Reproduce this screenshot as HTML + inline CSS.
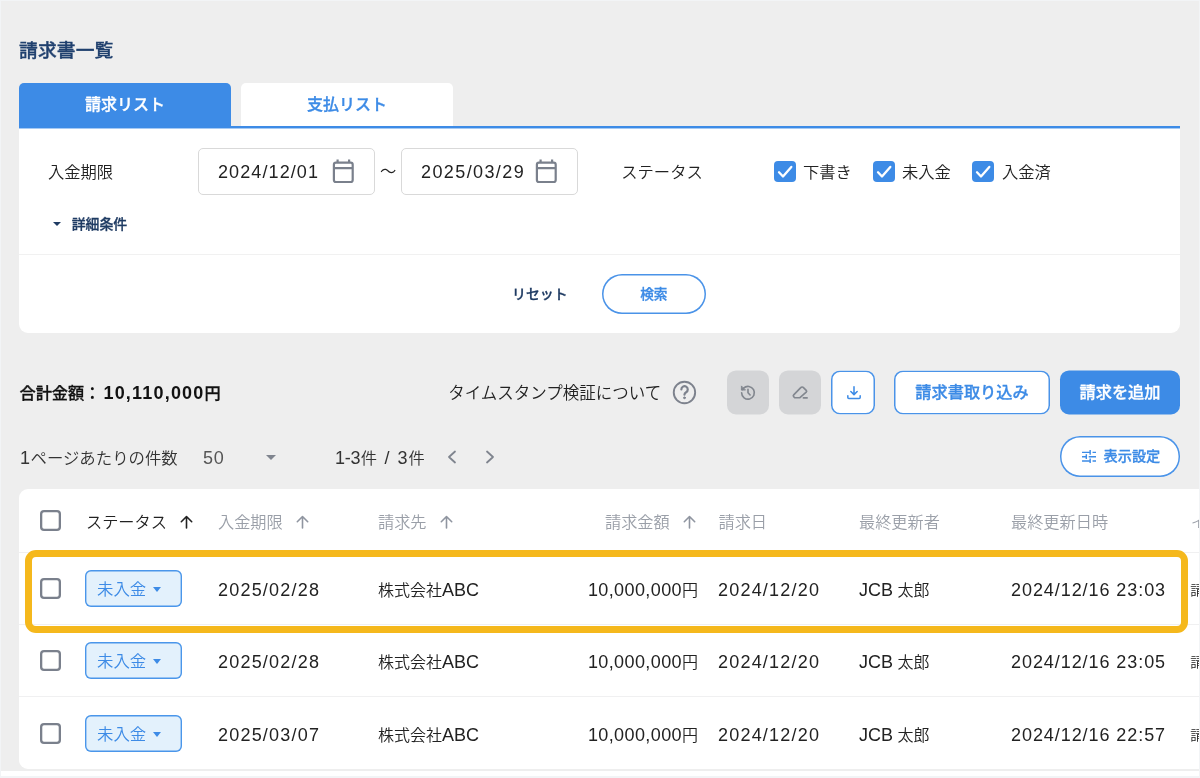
<!DOCTYPE html>
<html lang="ja">
<head>
<meta charset="utf-8">
<title>請求書一覧</title>
<style>
*{box-sizing:border-box;margin:0;padding:0}
html,body{width:1200px;height:778px;overflow:hidden}
body{background:#eeeeee;font-family:"Liberation Sans","Noto Sans CJK JP",sans-serif;font-size:16.3px;font-weight:350;color:#222;position:relative;-webkit-font-smoothing:antialiased}
.abs{position:absolute}
.l{font-size:18px}
.edge-l{left:0;top:0;width:1.200px;height:778px;background:#f2f4f6;z-index:5}
.edge-r{left:1198.900px;top:0;width:1.100px;height:778px;background:#f2f4f6;z-index:5}
.edge-t{left:0;top:0;width:1200px;height:1.200px;background:#f2f4f6;z-index:5}
.edge-b1{left:1px;top:771px;width:1199px;height:5px;background:#fff}
.edge-b2{left:0;top:776px;width:1200px;height:2px;background:#f2f4f6;z-index:5}
h1{position:absolute;left:19px;top:37.600px;font-size:18.800px;line-height:26px;font-weight:500;-webkit-text-stroke:.350px #20406e;color:#20406e;letter-spacing:.100px;transform:scaleY(.960)}
.tab{position:absolute;top:82.500px;height:44.500px;width:212px;border-radius:5px 5px 0 0;font-weight:500;-webkit-text-stroke:.300px currentColor;font-size:16px;line-height:44.500px;text-align:center}
.tab.on{left:19px;background:#3d8be6;color:#fff}
.tab.off{left:241px;background:#fff;color:#3d8be6}
.tabline{z-index:1;left:19px;top:126px;width:1161px;height:3px;background:linear-gradient(to bottom,#3d8be6 0,#3d8be6 2px,#a6caf4 2px,#a6caf4 3px)}
.card{left:19px;top:128px;width:1161px;height:205px;background:#fff;border-radius:0 0 9px 9px}
.lbl{position:absolute;line-height:24px;font-size:16.3px;color:#222;white-space:nowrap}
.date{position:absolute;top:147.5px;width:177px;height:47px;border:1px solid #d9d9d9;border-radius:5px;background:#fff}
.date span{position:absolute;left:19px;top:10.5px;line-height:26px;font-size:18px;letter-spacing:1.1px;color:#222;white-space:nowrap}
.date svg{position:absolute;left:132px;top:10px;overflow:visible}
.cb{position:absolute;top:160.5px;width:21.5px;height:21.5px;border-radius:4px;background:#3d8be6}
.cb svg{position:absolute;left:0;top:0}
.more{position:absolute;left:71.700px;top:214.300px;font-size:13.9px;line-height:20px;font-weight:500;-webkit-text-stroke:.300px currentColor;color:#1f3b63;white-space:nowrap}
.caret{position:absolute;width:0;height:0;border-left:4px solid transparent;border-right:4px solid transparent;border-top:4.5px solid #1f3b63}
.hr{left:19px;top:254px;width:1161px;height:1px;background:#f1f1f1}
.reset{position:absolute;left:512px;top:284px;font-size:13.9px;line-height:20px;font-weight:500;-webkit-text-stroke:.300px currentColor;color:#1f3b63;white-space:nowrap}
.pill{position:absolute;height:40px;border:0;box-shadow:inset 0 0 0 1.500px #4a93e8;border-radius:20px;background:#fff;color:#3d8be6;font-weight:500;-webkit-text-stroke:.300px currentColor;font-size:13.7px;line-height:41.500px;text-align:center;white-space:nowrap}
.total{position:absolute;left:19.500px;top:381px;line-height:24px;font-size:16.2px;font-weight:500;-webkit-text-stroke:.300px currentColor;color:#111;white-space:nowrap}
.total .l{font-size:18px;letter-spacing:1.200px;margin-left:3px;font-weight:700;-webkit-text-stroke:0}
.ibtn{position:absolute;top:370px;height:43.500px;border-radius:9px;transform:translateY(.450px)}
.ibtn.g{width:42px;background:#d4d5d7}
.ibtn.o{width:44.300px;background:#fff;box-shadow:inset 0 0 0 1.500px #4a93e8}
.ibtn svg{position:absolute;left:50%;top:50%;transform:translate(-50%,-50%)}
.btn{position:absolute;top:370px;transform:translateY(.450px);height:43.500px;border-radius:9px;font-weight:500;-webkit-text-stroke:.300px currentColor;font-size:16.2px;line-height:44px;text-align:center;white-space:nowrap}
.btn.o{background:#fff;box-shadow:inset 0 0 0 1.500px #4a93e8;color:#3d8be6}
.btn.f{background:#3d8be6;color:#fff}
.pg{position:absolute;top:445.700px;line-height:24px;font-size:16.3px;color:#333;white-space:nowrap}
.tbl{left:19px;top:489.400px;width:1190px;height:279.600px;background:#fff;border-radius:9px 0 0 9px;overflow:hidden}
.rowline{position:absolute;left:0;width:1190px;height:1px;background:#f0f0f1}
.th{position:absolute;top:510.300px;line-height:24px;font-size:16.2px;color:#9a9fa8;white-space:nowrap}
.th.k{color:#222}
.td{position:absolute;line-height:24px;font-size:16px;color:#222;white-space:nowrap}
.td .l{letter-spacing:1.200px}
.ck{position:absolute;left:40px;width:21px;height:21px;border:0;box-shadow:inset 0 0 0 2.300px #7a808c;border-radius:4px;background:#fff}
.badge{position:absolute;left:85px;width:97px;height:37px;border:0;box-shadow:inset 0 0 0 1.400px #4a96ea;border-radius:6px;background:#e3f1fc;color:#3d8be6;font-size:16.400px;line-height:39.500px;padding-left:12px;white-space:nowrap}
.badge i{position:absolute;left:68.400px;top:16.700px;width:0;height:0;border-left:4.900px solid transparent;border-right:4.900px solid transparent;border-top:5.200px solid #3d8be6}
.hl{left:25px;top:550px;width:1163px;height:83px;border:7px solid #f5b81c;border-radius:11px}
</style>
</head>
<body>
<div id="root" style="position:absolute;left:0;top:0;width:1200px;height:778px;will-change:transform">
<div class="abs edge-l"></div>
<div class="abs edge-r"></div>
<div class="abs edge-t"></div>
<div class="abs edge-b1"></div>
<div class="abs edge-b2"></div>

<h1>請求書一覧</h1>
<div class="tab on">請求リスト</div>
<div class="tab off">支払リスト</div>
<div class="abs tabline"></div>

<div class="abs card"></div>
<div class="lbl" style="left:48px;top:159.500px">入金期限</div>
<div class="date" style="left:198px"><span>2024/12/01</span>
<svg width="24" height="26" viewBox="0 0 24 26" fill="none" stroke="#7a808c" stroke-width="2.200"><rect x="2.900" y="3.700" width="18.800" height="19.300" rx="2"/><path d="M2.900 9.200h18.800M6.600 .500v3.500M18.100 .500v3.500"/></svg></div>
<div class="lbl" style="left:380px;top:159.300px">～</div>
<div class="date" style="left:401px"><span style="letter-spacing:1.400px">2025/03/29</span>
<svg width="24" height="26" viewBox="0 0 24 26" fill="none" stroke="#7a808c" stroke-width="2.200"><rect x="2.900" y="3.700" width="18.800" height="19.300" rx="2"/><path d="M2.900 9.200h18.800M6.600 .500v3.500M18.100 .500v3.500"/></svg></div>
<div class="lbl" style="left:621.300px;top:159.500px">ステータス</div>

<div class="cb" style="left:774px"><svg width="21" height="21" viewBox="0 0 21 21" fill="none" stroke="#fff" stroke-width="2.3" stroke-linecap="round" stroke-linejoin="round"><path d="M5 11.300l4 4.200 8.300-9.600"/></svg></div>
<div class="lbl" style="left:803px;top:159.500px">下書き</div>
<div class="cb" style="left:873px"><svg width="21" height="21" viewBox="0 0 21 21" fill="none" stroke="#fff" stroke-width="2.3" stroke-linecap="round" stroke-linejoin="round"><path d="M5 11.300l4 4.200 8.300-9.600"/></svg></div>
<div class="lbl" style="left:902px;top:159.500px">未入金</div>
<div class="cb" style="left:972px"><svg width="21" height="21" viewBox="0 0 21 21" fill="none" stroke="#fff" stroke-width="2.3" stroke-linecap="round" stroke-linejoin="round"><path d="M5 11.300l4 4.200 8.300-9.600"/></svg></div>
<div class="lbl" style="left:1002px;top:159.500px">入金済</div>

<div class="caret" style="left:53px;top:222px"></div>
<div class="more">詳細条件</div>
<div class="abs hr"></div>
<div class="reset">リセット</div>
<div class="pill" style="left:601.700px;top:273.700px;width:104.300px;height:40.300px">検索</div>

<div class="total">合計金額：<span class="l">10,110,000</span>円</div>
<div class="lbl" style="left:448.200px;top:381px;font-size:16.500px">タイムスタンプ検証について</div>
<svg class="abs" style="left:672px;top:380px;overflow:visible" width="24" height="24" viewBox="0 0 24 24" fill="none" stroke="#7d828d" stroke-width="1.900" stroke-linecap="round"><g transform="translate(.450 .500)"><circle cx="12" cy="12" r="10.700"/><path d="M8.900 8.900a3.200 3.200 0 1 1 4.800 2.800c-1 .600-1.700 1.300-1.700 2.500" stroke-width="2.200"/><circle cx="12" cy="17.300" r=".900" fill="#7d828d" stroke-width="1"/></g></svg>

<div class="ibtn g" style="left:727px"><svg width="18" height="18" viewBox="0 0 24 24" fill="none" stroke="#82878f" stroke-width="2.2" stroke-linecap="round" stroke-linejoin="round"><path d="M3.500 12.400a8.500 8.500 0 1 0 2.600-6.100L4.200 8.200"/><path d="M3.200 3.800v5h5z" fill="#82878f" stroke-width="1.200"/><path d="M12 7.800v4.600l2.800 3"/></svg></div>
<div class="ibtn g" style="left:779px"><svg width="20" height="18" viewBox="0 0 26 24" fill="none" stroke="#82878f" stroke-width="2.2" stroke-linecap="round" stroke-linejoin="round"><path d="M14 5.600L4.600 15.200a1.800 1.800 0 0 0 0 2.500l1.300 1.300h7L21.300 11.700a1.800 1.800 0 0 0 0-2.500l-3.700-3.700a2.500 2.500 0 0 0-3.600.100z"/><path d="M17.500 19.300h5"/></svg></div>
<div class="ibtn o" style="left:831px"><svg style="margin-left:.400px" width="17" height="16" viewBox="0 0 25.500 24" fill="none" stroke="#3d8be6" stroke-width="2.300" stroke-linecap="round" stroke-linejoin="round"><path d="M12.750 3.500v11.500M8 10.500l4.750 4.750 4.750-4.750M3.500 17v2.500a1.500 1.500 0 0 0 1.500 1.500h15.500a1.500 1.500 0 0 0 1.500-1.500V17"/></svg></div>
<div class="btn o" style="left:894px;width:156px">請求書取り込み</div>
<div class="btn f" style="left:1060px;width:120px">請求を追加</div>

<div class="pg" style="left:20px;font-size:16.400px"><span class="l" style="letter-spacing:.500px">1</span>ページあたりの件数</div>
<div class="pg" style="left:203px;color:#555"><span class="l" style="letter-spacing:.8px">50</span></div>
<div class="caret" style="left:266px;top:455px;border-left-width:5px;border-right-width:5px;border-top:5.5px solid #7f848e"></div>
<div class="pg" style="left:335px"><span class="l" style="letter-spacing:-.300px">1-3</span><span style="margin-left:.500px">件</span><span class="l" style="margin:0 8px 0 7.500px">/</span><span class="l">3</span><span style="margin-left:1px">件</span></div>
<svg class="abs" style="left:446px;top:449px" width="12" height="16" viewBox="0 0 12 16" fill="none" stroke="#7f848e" stroke-width="1.8" stroke-linecap="round" stroke-linejoin="round"><path d="M9 2.500L3 8l6 5.500"/></svg>
<svg class="abs" style="left:484px;top:449px" width="12" height="16" viewBox="0 0 12 16" fill="none" stroke="#7f848e" stroke-width="1.8" stroke-linecap="round" stroke-linejoin="round"><path d="M3 2.500L9 8l-6 5.500"/></svg>
<div class="pill" style="left:1059.700px;top:436.400px;width:120.300px;height:40.500px;font-size:14.200px;padding-left:24.200px;line-height:41.300px">表示設定</div>
<svg class="abs" style="left:1081.900px;top:450px" width="14.400" height="13.400" viewBox="0 0 15 14" fill="none" stroke="#3d8be6" stroke-width="1.5"><path d="M0 2.500h8M11 2.500h4M0 7h4M7 7h8M0 11.500h8M11 11.500h4M8.500 0v5M4.500 4.500v5M8.500 9v5"/></svg>

<div class="abs tbl">
<div class="rowline" style="top:62.600px"></div>
<div class="rowline" style="top:134.600px"></div>
<div class="rowline" style="top:206.900px"></div>
</div>
<div class="ck" style="top:510px"></div>
<div class="th k" style="left:86px">ステータス</div><svg class="abs" style="left:180px;top:514.500px" width="13" height="14" viewBox="0 0 13 14" fill="none" stroke="#222" stroke-width="1.600" stroke-linecap="round" stroke-linejoin="round"><path d="M6.500 13V1.500M1.300 6.700l5.200-5.200 5.200 5.200"/></svg>
<div class="th" style="left:218px">入金期限</div><svg class="abs" style="left:296px;top:514.500px" width="13" height="14" viewBox="0 0 13 14" fill="none" stroke="#8f95a0" stroke-width="1.600" stroke-linecap="round" stroke-linejoin="round"><path d="M6.500 13V1.500M1.300 6.700l5.200-5.200 5.200 5.200"/></svg>
<div class="th" style="left:378px">請求先</div><svg class="abs" style="left:440px;top:514.500px" width="13" height="14" viewBox="0 0 13 14" fill="none" stroke="#8f95a0" stroke-width="1.600" stroke-linecap="round" stroke-linejoin="round"><path d="M6.500 13V1.500M1.300 6.700l5.200-5.200 5.200 5.200"/></svg>
<div class="th" style="left:605px">請求金額</div><svg class="abs" style="left:682.5px;top:514.500px" width="13" height="14" viewBox="0 0 13 14" fill="none" stroke="#8f95a0" stroke-width="1.600" stroke-linecap="round" stroke-linejoin="round"><path d="M6.500 13V1.500M1.300 6.700l5.200-5.200 5.200 5.200"/></svg>
<div class="th" style="left:718.500px">請求日</div>
<div class="th" style="left:859px">最終更新者</div>
<div class="th" style="left:1011px">最終更新日時</div>
<div class="th" style="left:1191px;font-size:14px">インボイス</div>

<div class="ck" style="top:578px"></div>
<div class="badge" style="top:570px">未入金<i></i></div>
<div class="td" style="left:218px;top:577.500px"><span class="l">2025/02/28</span></div>
<div class="td" style="left:378px;top:577.500px">株式会社<span class="l" style="letter-spacing:0">ABC</span></div>
<div class="td" style="right:502px;top:577.500px"><span class="l" style="letter-spacing:.400px">10,000,000</span>円</div>
<div class="td" style="left:718px;top:577.500px"><span class="l">2024/12/20</span></div>
<div class="td" style="left:859px;top:577.500px"><span class="l" style="letter-spacing:0">JCB</span> 太郎</div>
<div class="td" style="left:1011px;top:577.500px"><span class="l" style="letter-spacing:.930px">2024/12/16 23:03</span></div>
<div class="td" style="left:1190.300px;top:577.500px;font-size:14px">請求書</div>

<div class="ck" style="top:650px"></div>
<div class="badge" style="top:642px">未入金<i></i></div>
<div class="td" style="left:218px;top:649.500px"><span class="l">2025/02/28</span></div>
<div class="td" style="left:378px;top:649.500px">株式会社<span class="l" style="letter-spacing:0">ABC</span></div>
<div class="td" style="right:502px;top:649.500px"><span class="l" style="letter-spacing:.400px">10,000,000</span>円</div>
<div class="td" style="left:718px;top:649.500px"><span class="l">2024/12/20</span></div>
<div class="td" style="left:859px;top:649.500px"><span class="l" style="letter-spacing:0">JCB</span> 太郎</div>
<div class="td" style="left:1011px;top:649.500px"><span class="l" style="letter-spacing:.930px">2024/12/16 23:05</span></div>
<div class="td" style="left:1190.300px;top:649.500px;font-size:14px">請求書</div>

<div class="ck" style="top:723px"></div>
<div class="badge" style="top:715px">未入金<i></i></div>
<div class="td" style="left:218px;top:722.500px"><span class="l">2025/03/07</span></div>
<div class="td" style="left:378px;top:722.500px">株式会社<span class="l" style="letter-spacing:0">ABC</span></div>
<div class="td" style="right:502px;top:722.500px"><span class="l" style="letter-spacing:.400px">10,000,000</span>円</div>
<div class="td" style="left:718px;top:722.500px"><span class="l">2024/12/20</span></div>
<div class="td" style="left:859px;top:722.500px"><span class="l" style="letter-spacing:0">JCB</span> 太郎</div>
<div class="td" style="left:1011px;top:722.500px"><span class="l" style="letter-spacing:.930px">2024/12/16 22:57</span></div>
<div class="td" style="left:1190.300px;top:722.500px;font-size:14px">請求書</div>

<div class="abs hl"></div>
</div>
</body>
</html>
